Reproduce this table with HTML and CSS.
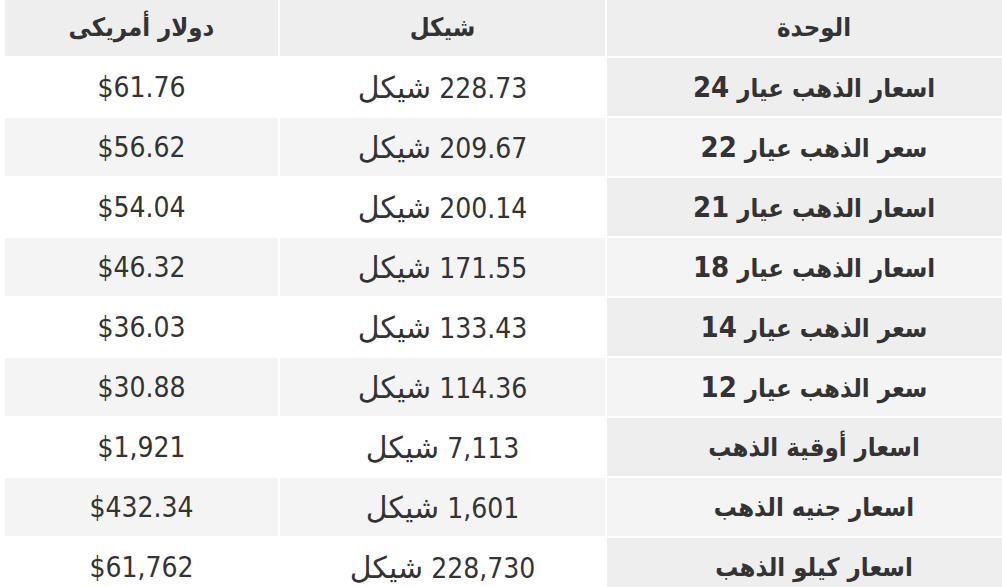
FILE: index.html
```html
<!DOCTYPE html>
<html lang="ar" dir="rtl">
<head>
<meta charset="utf-8">
<link rel="stylesheet" href="styles.css">
</head>
<body>
<table class="prices">
  <thead>
    <tr><th class="c-unit">الوحدة</th><th class="c-ils">شيكل</th><th class="c-usd">دولار أمريكى</th></tr>
  </thead>
  <tbody>
    <tr><td class="unit">اسعار الذهب عيار <span class="k">24</span></td><td>228.73 <span class="cur">شيكل</span></td><td>$61.76</td></tr>
    <tr><td class="unit">سعر الذهب عيار <span class="k">22</span></td><td>209.67 <span class="cur">شيكل</span></td><td>$56.62</td></tr>
    <tr><td class="unit">اسعار الذهب عيار <span class="k">21</span></td><td>200.14 <span class="cur">شيكل</span></td><td>$54.04</td></tr>
    <tr><td class="unit">اسعار الذهب عيار <span class="k">18</span></td><td>171.55 <span class="cur">شيكل</span></td><td>$46.32</td></tr>
    <tr><td class="unit">سعر الذهب عيار <span class="k">14</span></td><td>133.43 <span class="cur">شيكل</span></td><td>$36.03</td></tr>
    <tr><td class="unit">سعر الذهب عيار <span class="k">12</span></td><td>114.36 <span class="cur">شيكل</span></td><td>$30.88</td></tr>
    <tr><td class="unit">اسعار أوقية الذهب</td><td>7,113 <span class="cur">شيكل</span></td><td>$1,921</td></tr>
    <tr><td class="unit">اسعار جنيه الذهب</td><td>1,601 <span class="cur">شيكل</span></td><td>$432.34</td></tr>
    <tr><td class="unit">اسعار كيلو الذهب</td><td>228,730 <span class="cur">شيكل</span></td><td>$61,762</td></tr>
  </tbody>
</table>
</body>
</html>
```

FILE: styles.css
```css
html, body {
  margin: 0;
  padding: 0;
  background: #ffffff;
  overflow: hidden;
}
.prices {
  border-collapse: separate;
  border-spacing: 2px;
  margin: -4px -21px 0 3px;
  width: 1020px;
  table-layout: fixed;
  color: #333333;
  font-family: "DejaVu Sans Condensed", "DejaVu Sans", sans-serif;
  font-stretch: condensed;
}
.prices th, .prices td {
  height: 58px;
  padding: 0;
  text-align: center;
  vertical-align: middle;
}
.prices th {
  background: #eeeeee;
  font-weight: bold;
  font-size: 25.5px;
}
.c-unit { width: 414px; }
.c-ils { width: 325px; }
.c-usd { width: 273px; }
.prices td {
  font-size: 28px;
}
.prices tbody tr:nth-child(even) td {
  background: #f4f4f4;
}
.prices td.unit {
  background: #eeeeee;
  font-weight: bold;
  font-size: 25.5px;
}
.prices .k {
  font-size: 29px;
}
.prices .cur {
  font-family: "DejaVu Sans", sans-serif;
  font-stretch: normal;
  font-size: 30px;
}
```
